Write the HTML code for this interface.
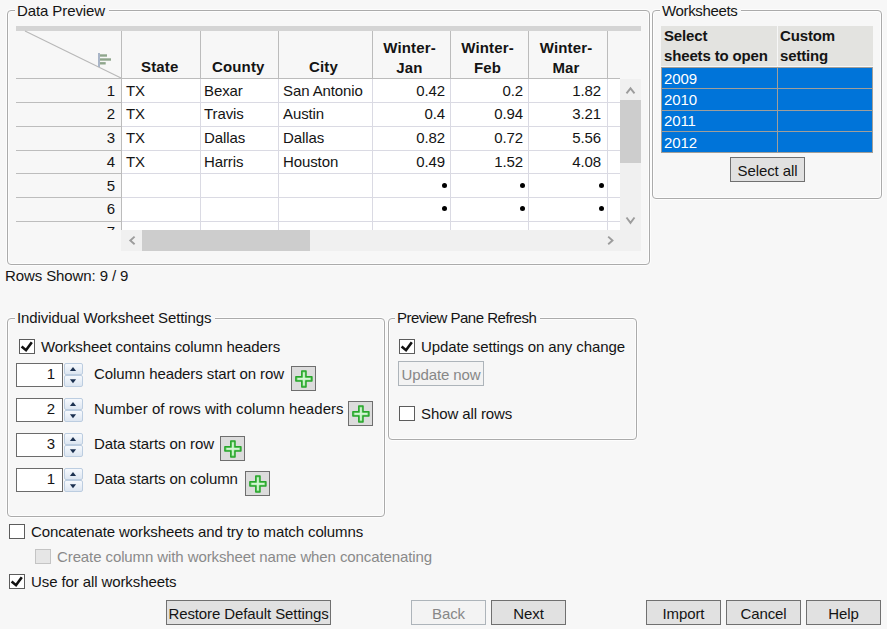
<!DOCTYPE html>
<html><head><meta charset="utf-8">
<style>
html,body{margin:0;padding:0;}
body{width:887px;height:629px;overflow:hidden;background:#f7f7f7;position:relative;font-family:"Liberation Sans",sans-serif;font-size:15px;letter-spacing:-0.1px;color:#141414;}
.a{position:absolute;box-sizing:border-box;}
.t{position:absolute;white-space:nowrap;line-height:17px;}
.b{font-weight:bold;font-size:15px;letter-spacing:0.15px;}
.fs{position:absolute;box-sizing:border-box;border:1px solid #ababab;border-radius:4px;box-shadow:0 0 0 1px #fdfdfd, inset 0 0 0 1px #fdfdfd;}
.lg{position:absolute;white-space:nowrap;line-height:17px;background:#f7f7f7;padding:0 4px 0 2px;}
.hl{position:absolute;height:1px;background:#dadae3;}
.vl{position:absolute;width:1px;background:#dadae3;}
.cb{position:absolute;box-sizing:border-box;width:16px;height:15px;border:1px solid #5c5c5c;background:#fff;}
.btn{position:absolute;box-sizing:border-box;height:25px;border:1px solid #707070;background:#e1e1e1;text-align:center;line-height:23px;padding-top:1px;}
.spin{position:absolute;box-sizing:border-box;width:47px;height:24px;border:1px solid #6b6b6b;background:#fff;}
.sp{position:absolute;box-sizing:border-box;width:19px;height:12px;border:1px solid #bccde0;border-radius:2px;background:linear-gradient(#f6f9fd,#dde6f1);}
.sp svg{position:absolute;left:0;top:0;}
.plus{position:absolute;box-sizing:border-box;width:25px;height:25px;border:1px solid #6e6e6e;background:#dcdcdc;}
</style></head><body>

<!-- Data Preview fieldset -->
<div class="fs" style="left:7px;top:10px;width:643px;height:255px;"></div>
<div class="lg" style="left:15px;top:2px;">Data Preview</div>

<!-- table -->
<div class="a" style="left:16px;top:26px;width:625px;height:5px;background:#d4d4d4;"></div>
<!-- header row bg -->
<div class="a" style="left:16px;top:31px;width:604px;height:47px;background:#f7f7f7;"></div>
<!-- data area white -->
<div class="a" style="left:122px;top:79px;width:498px;height:151px;background:#fff;"></div>
<!-- header bottom line -->
<div class="a" style="left:16px;top:78px;width:604px;height:1px;background:#bcbcbc;"></div>
<!-- header vertical lines -->
<div class="a" style="left:121px;top:31px;width:1px;height:199px;background:#bcbcbc;"></div>
<div class="a" style="left:200px;top:31px;width:1px;height:47px;background:#bcbcbc;"></div>
<div class="a" style="left:278px;top:31px;width:1px;height:47px;background:#bcbcbc;"></div>
<div class="a" style="left:372px;top:31px;width:1px;height:47px;background:#bcbcbc;"></div>
<div class="a" style="left:450px;top:31px;width:1px;height:47px;background:#bcbcbc;"></div>
<div class="a" style="left:528px;top:31px;width:1px;height:47px;background:#bcbcbc;"></div>
<div class="a" style="left:607px;top:31px;width:1px;height:47px;background:#bcbcbc;"></div>
<!-- data vertical lines -->
<div class="vl" style="left:200px;top:79px;height:151px;"></div>
<div class="vl" style="left:278px;top:79px;height:151px;"></div>
<div class="vl" style="left:372px;top:79px;height:151px;"></div>
<div class="vl" style="left:450px;top:79px;height:151px;"></div>
<div class="vl" style="left:528px;top:79px;height:151px;"></div>
<div class="vl" style="left:607px;top:79px;height:151px;"></div>
<!-- row lines: row header part darker -->
<div class="a" style="left:16px;top:102px;width:105px;height:1px;background:#bdbdbd;"></div>
<div class="a" style="left:16px;top:126px;width:105px;height:1px;background:#bdbdbd;"></div>
<div class="a" style="left:16px;top:150px;width:105px;height:1px;background:#bdbdbd;"></div>
<div class="a" style="left:16px;top:173px;width:105px;height:1px;background:#bdbdbd;"></div>
<div class="a" style="left:16px;top:197px;width:105px;height:1px;background:#bdbdbd;"></div>
<div class="a" style="left:16px;top:221px;width:105px;height:1px;background:#bdbdbd;"></div>
<div class="hl" style="left:122px;top:102px;width:498px;"></div>
<div class="hl" style="left:122px;top:126px;width:498px;"></div>
<div class="hl" style="left:122px;top:150px;width:498px;"></div>
<div class="hl" style="left:122px;top:173px;width:498px;"></div>
<div class="hl" style="left:122px;top:197px;width:498px;"></div>
<div class="hl" style="left:122px;top:221px;width:498px;"></div>
<!-- diagonal -->
<svg class="a" style="left:16px;top:30px;" width="106" height="49"><line x1="9" y1="1" x2="105" y2="48" stroke="#b8b8b8" stroke-width="1.1"/>
<g fill="#8fa68c"><rect x="82" y="23" width="2" height="14" fill="#a9b5c8"/><rect x="84" y="24.3" width="7" height="2.4"/><rect x="84" y="28.3" width="11" height="2.4"/><rect x="84" y="32.1" width="5.7" height="2.4"/></g></svg>

<!-- header text -->
<div class="t b" style="left:141px;top:58px;">State</div>
<div class="t b" style="left:212px;top:58px;">County</div>
<div class="t b" style="left:309px;top:58px;">City</div>
<div class="t b" style="left:373px;top:38px;text-align:center;width:73px;line-height:20px;">Winter-<br>Jan</div>
<div class="t b" style="left:451px;top:38px;text-align:center;width:73px;line-height:20px;">Winter-<br>Feb</div>
<div class="t b" style="left:529px;top:38px;text-align:center;width:74px;line-height:20px;">Winter-<br>Mar</div>

<!-- row numbers -->
<div class="t" style="left:60px;width:55px;text-align:right;top:82px;">1</div>
<div class="t" style="left:60px;width:55px;text-align:right;top:105px;">2</div>
<div class="t" style="left:60px;width:55px;text-align:right;top:129px;">3</div>
<div class="t" style="left:60px;width:55px;text-align:right;top:153px;">4</div>
<div class="t" style="left:60px;width:55px;text-align:right;top:177px;">5</div>
<div class="t" style="left:60px;width:55px;text-align:right;top:200px;">6</div>

<div class="t" style="left:126px;top:82px;">TX</div>
<div class="t" style="left:126px;top:105px;">TX</div>
<div class="t" style="left:126px;top:129px;">TX</div>
<div class="t" style="left:126px;top:153px;">TX</div>
<div class="t" style="left:204px;top:82px;">Bexar</div>
<div class="t" style="left:204px;top:105px;">Travis</div>
<div class="t" style="left:204px;top:129px;">Dallas</div>
<div class="t" style="left:204px;top:153px;">Harris</div>
<div class="t" style="left:283px;top:82px;">San Antonio</div>
<div class="t" style="left:283px;top:105px;">Austin</div>
<div class="t" style="left:283px;top:129px;">Dallas</div>
<div class="t" style="left:283px;top:153px;">Houston</div>

<div class="t" style="left:372px;width:73px;text-align:right;top:82px;">0.42</div>
<div class="t" style="left:372px;width:73px;text-align:right;top:105px;">0.4</div>
<div class="t" style="left:372px;width:73px;text-align:right;top:129px;">0.82</div>
<div class="t" style="left:372px;width:73px;text-align:right;top:153px;">0.49</div>
<div class="t" style="left:450px;width:73px;text-align:right;top:82px;">0.2</div>
<div class="t" style="left:450px;width:73px;text-align:right;top:105px;">0.94</div>
<div class="t" style="left:450px;width:73px;text-align:right;top:129px;">0.72</div>
<div class="t" style="left:450px;width:73px;text-align:right;top:153px;">1.52</div>
<div class="t" style="left:528px;width:73px;text-align:right;top:82px;">1.82</div>
<div class="t" style="left:528px;width:73px;text-align:right;top:105px;">3.21</div>
<div class="t" style="left:528px;width:73px;text-align:right;top:129px;">5.56</div>
<div class="t" style="left:528px;width:73px;text-align:right;top:153px;">4.08</div>
<!-- dots -->
<div class="a" style="left:442px;top:183px;width:5px;height:5px;border-radius:50%;background:#000;"></div>
<div class="a" style="left:520px;top:183px;width:5px;height:5px;border-radius:50%;background:#000;"></div>
<div class="a" style="left:599px;top:183px;width:5px;height:5px;border-radius:50%;background:#000;"></div>
<div class="a" style="left:442px;top:206px;width:5px;height:5px;border-radius:50%;background:#000;"></div>
<div class="a" style="left:520px;top:206px;width:5px;height:5px;border-radius:50%;background:#000;"></div>
<div class="a" style="left:599px;top:206px;width:5px;height:5px;border-radius:50%;background:#000;"></div>
<!-- partial row 7 -->
<div class="a" style="left:60px;top:222px;width:55px;height:8px;overflow:hidden;"><div class="t" style="right:0;top:1px;">7</div></div>

<!-- vertical scrollbar -->
<div class="a" style="left:620px;top:79px;width:21px;height:172px;background:#f0f0f0;"></div>
<div class="a" style="left:620px;top:100px;width:21px;height:63px;background:#cdcdcd;"></div>
<svg class="a" style="left:620px;top:79px;" width="21" height="151"><polyline points="6.5,14.3 10.5,9.3 14.5,14.3" fill="none" stroke="#9c9c9c" stroke-width="1.9"/><polyline points="6.5,138.5 10.5,143.8 14.5,138.5" fill="none" stroke="#9c9c9c" stroke-width="1.9"/></svg>
<!-- horizontal scrollbar -->
<div class="a" style="left:121px;top:230px;width:520px;height:21px;background:#f0f0f0;"></div>
<div class="a" style="left:142px;top:230px;width:168px;height:21px;background:#cdcdcd;"></div>
<svg class="a" style="left:121px;top:230px;" width="500" height="21"><polyline points="13.6,6.6 9.3,10.5 13.6,14.3" fill="none" stroke="#9c9c9c" stroke-width="1.9"/><polyline points="487.2,6.6 491.5,10.5 487.2,14.3" fill="none" stroke="#9c9c9c" stroke-width="1.9"/></svg>

<div class="t" style="left:5px;top:267px;">Rows Shown: 9 / 9</div>

<!-- Worksheets -->
<div class="fs" style="left:652px;top:10px;width:230px;height:189px;"></div>
<div class="lg" style="left:660px;top:2px;letter-spacing:-0.35px;">Worksheets</div>
<div class="a" style="left:661px;top:26px;width:212px;height:40px;background:#e3e3e0;"></div>
<div class="a" style="left:777px;top:26px;width:1px;height:40px;background:#f7f7f7;"></div>
<div class="t b" style="left:664px;top:26px;line-height:20px;letter-spacing:-0.15px;">Select<br>sheets to open</div>
<div class="t b" style="left:780px;top:26px;line-height:20px;letter-spacing:-0.15px;">Custom<br>setting</div>
<div class="a" style="left:661px;top:67px;width:212px;height:86px;background:#0074d9;border:1px solid #a19e99;"></div>
<div class="a" style="left:661px;top:88px;width:212px;height:1px;background:#a19e99;"></div>
<div class="a" style="left:661px;top:110px;width:212px;height:1px;background:#a19e99;"></div>
<div class="a" style="left:661px;top:131px;width:212px;height:1px;background:#a19e99;"></div>
<div class="a" style="left:777px;top:67px;width:1px;height:86px;background:#a19e99;"></div>
<div class="t" style="left:664px;top:70px;color:#fff;">2009</div>
<div class="t" style="left:664px;top:91px;color:#fff;">2010</div>
<div class="t" style="left:664px;top:112px;color:#fff;">2011</div>
<div class="t" style="left:664px;top:134px;color:#fff;">2012</div>
<div class="btn" style="left:730px;top:157px;width:75px;">Select all</div>

<!-- Individual Worksheet Settings -->
<div class="fs" style="left:7px;top:318px;width:378px;height:199px;"></div>
<div class="lg" style="left:15px;top:309px;">Individual Worksheet Settings</div>
<div class="cb" style="left:19px;top:339px;"></div>
<svg class="a" style="left:19px;top:339px;" width="16" height="15"><polyline points="2.6,7.6 7,11.2 12.8,3.2" fill="none" stroke="#111" stroke-width="2.6"/></svg>
<div class="t" style="left:41px;top:338px;">Worksheet contains column headers</div>

<div class="spin" style="left:16px;top:363px;"></div><div class="t" style="left:16px;width:39px;text-align:right;top:365px;">1</div>
<div class="sp" style="left:64px;top:363px;"><svg width="17" height="10"><path d="M4.9,7L8,3L11.1,7Z" fill="#1b3050"/></svg></div><div class="sp" style="left:64px;top:375px;"><svg width="17" height="10"><path d="M4.9,3.2L8,7.2L11.1,3.2Z" fill="#1b3050"/></svg></div>
<div class="t" style="left:94px;top:365px;">Column headers start on row</div>
<div class="plus" style="left:291px;top:366px;"><svg width="25" height="25" style="position:absolute;left:-1px;top:-1px;"><path d="M10.8,4.9H15V10.8H20.9V15H15V20.9H10.8V15H4.9V10.8H10.8Z" fill="#84db84" stroke="#27a52b" stroke-width="1.5" stroke-linejoin="round"/><path d="M12.9,6.6V19.2M6.6,12.9H19.2" stroke="#d4f5d4" stroke-width="1.6"/></svg></div>

<div class="spin" style="left:16px;top:398px;"></div><div class="t" style="left:16px;width:39px;text-align:right;top:400px;">2</div>
<div class="sp" style="left:64px;top:398px;"><svg width="17" height="10"><path d="M4.9,7L8,3L11.1,7Z" fill="#1b3050"/></svg></div><div class="sp" style="left:64px;top:410px;"><svg width="17" height="10"><path d="M4.9,3.2L8,7.2L11.1,3.2Z" fill="#1b3050"/></svg></div>
<div class="t" style="left:94px;top:400px;letter-spacing:0.06px;">Number of rows with column headers</div>
<div class="plus" style="left:348px;top:401px;"><svg width="25" height="25" style="position:absolute;left:-1px;top:-1px;"><path d="M10.8,4.9H15V10.8H20.9V15H15V20.9H10.8V15H4.9V10.8H10.8Z" fill="#84db84" stroke="#27a52b" stroke-width="1.5" stroke-linejoin="round"/><path d="M12.9,6.6V19.2M6.6,12.9H19.2" stroke="#d4f5d4" stroke-width="1.6"/></svg></div>

<div class="spin" style="left:16px;top:433px;"></div><div class="t" style="left:16px;width:39px;text-align:right;top:435px;">3</div>
<div class="sp" style="left:64px;top:433px;"><svg width="17" height="10"><path d="M4.9,7L8,3L11.1,7Z" fill="#1b3050"/></svg></div><div class="sp" style="left:64px;top:445px;"><svg width="17" height="10"><path d="M4.9,3.2L8,7.2L11.1,3.2Z" fill="#1b3050"/></svg></div>
<div class="t" style="left:94px;top:435px;">Data starts on row</div>
<div class="plus" style="left:220px;top:436px;"><svg width="25" height="25" style="position:absolute;left:-1px;top:-1px;"><path d="M10.8,4.9H15V10.8H20.9V15H15V20.9H10.8V15H4.9V10.8H10.8Z" fill="#84db84" stroke="#27a52b" stroke-width="1.5" stroke-linejoin="round"/><path d="M12.9,6.6V19.2M6.6,12.9H19.2" stroke="#d4f5d4" stroke-width="1.6"/></svg></div>

<div class="spin" style="left:16px;top:468px;"></div><div class="t" style="left:16px;width:39px;text-align:right;top:470px;">1</div>
<div class="sp" style="left:64px;top:468px;"><svg width="17" height="10"><path d="M4.9,7L8,3L11.1,7Z" fill="#1b3050"/></svg></div><div class="sp" style="left:64px;top:480px;"><svg width="17" height="10"><path d="M4.9,3.2L8,7.2L11.1,3.2Z" fill="#1b3050"/></svg></div>
<div class="t" style="left:94px;top:470px;">Data starts on column</div>
<div class="plus" style="left:245px;top:471px;"><svg width="25" height="25" style="position:absolute;left:-1px;top:-1px;"><path d="M10.8,4.9H15V10.8H20.9V15H15V20.9H10.8V15H4.9V10.8H10.8Z" fill="#84db84" stroke="#27a52b" stroke-width="1.5" stroke-linejoin="round"/><path d="M12.9,6.6V19.2M6.6,12.9H19.2" stroke="#d4f5d4" stroke-width="1.6"/></svg></div>

<!-- Preview Pane Refresh -->
<div class="fs" style="left:388px;top:318px;width:249px;height:122px;"></div>
<div class="lg" style="left:395px;top:309px;letter-spacing:-0.5px;">Preview Pane Refresh</div>
<div class="cb" style="left:399px;top:339px;"></div>
<svg class="a" style="left:399px;top:339px;" width="16" height="15"><polyline points="2.6,7.6 7,11.2 12.8,3.2" fill="none" stroke="#111" stroke-width="2.6"/></svg>
<div class="t" style="left:421px;top:338px;">Update settings on any change</div>
<div class="btn" style="left:398px;top:361px;width:86px;background:#f3f3f3;border-color:#adb4ba;color:#878787;">Update now</div>
<div class="cb" style="left:399px;top:406px;"></div>
<div class="t" style="left:421px;top:405px;">Show all rows</div>

<!-- bottom checkboxes -->
<div class="cb" style="left:9px;top:524px;"></div>
<div class="t" style="left:31px;top:523px;">Concatenate worksheets and try to match columns</div>
<div class="cb" style="left:35px;top:549px;background:#e6e6e6;border-color:#c4c4c4;"></div>
<div class="t" style="left:57px;top:548px;color:#8a8a8a;">Create column with worksheet name when concatenating</div>
<div class="cb" style="left:9px;top:574px;"></div>
<svg class="a" style="left:9px;top:574px;" width="16" height="15"><polyline points="2.6,7.6 7,11.2 12.8,3.2" fill="none" stroke="#111" stroke-width="2.6"/></svg>
<div class="t" style="left:31px;top:573px;">Use for all worksheets</div>

<!-- bottom buttons -->
<div class="btn" style="left:166px;top:600px;width:165px;">Restore Default Settings</div>
<div class="btn" style="left:411px;top:600px;width:75px;background:#f3f3f3;border-color:#adb4ba;color:#878787;">Back</div>
<div class="btn" style="left:491px;top:600px;width:75px;">Next</div>
<div class="btn" style="left:646px;top:600px;width:75px;">Import</div>
<div class="btn" style="left:726px;top:600px;width:75px;">Cancel</div>
<div class="btn" style="left:806px;top:600px;width:75px;">Help</div>

</body></html>
